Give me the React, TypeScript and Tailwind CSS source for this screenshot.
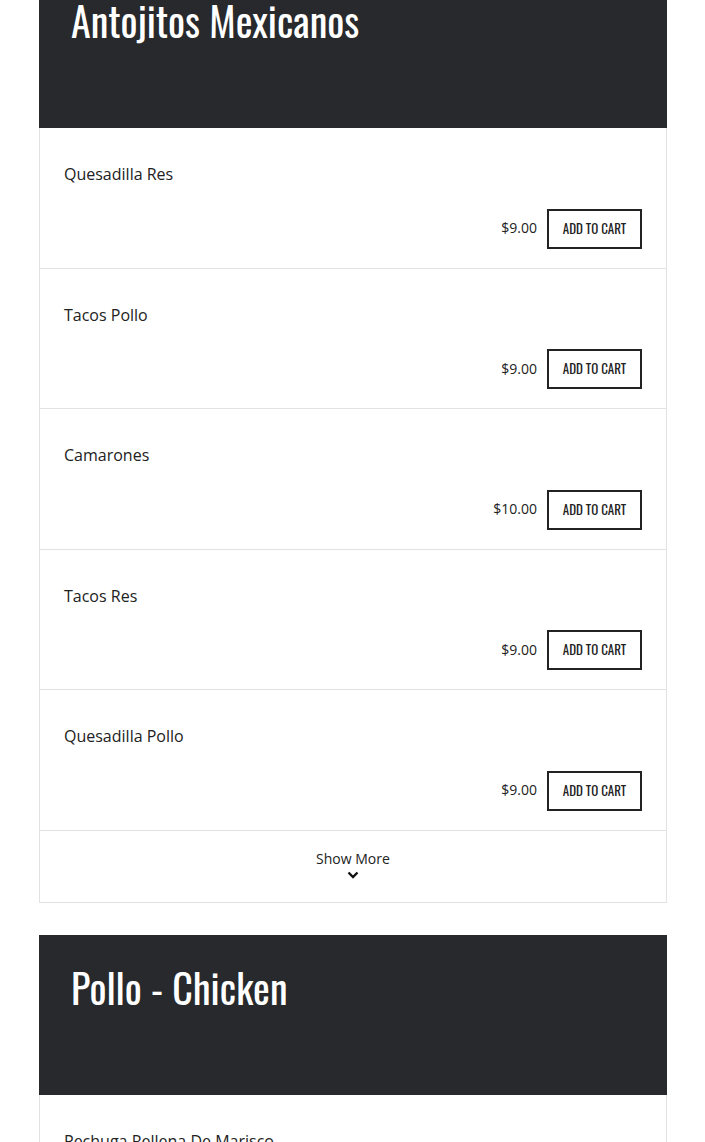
import React from 'react';

type MenuItem = { name: string; price: string };

const antojitos: MenuItem[] = [
    { name: 'Quesadilla Res', price: '$9.00' },
    { name: 'Tacos Pollo', price: '$9.00' },
    { name: 'Camarones', price: '$10.00' },
    { name: 'Tacos Res', price: '$9.00' },
    { name: 'Quesadilla Pollo', price: '$9.00' },
];

const headingFont = "font-['Oswald','Liberation_Sans_Narrow','DejaVu_Sans_Condensed',sans-serif]";

const CategoryHeader = ({ title }: { title: string }) => (
    <div className="bg-[#27292c] h-[160px] px-8 pt-[24px]">
        <h2 className={`${headingFont} text-white text-[40px] leading-[56px]`}>{title}</h2>
    </div>
);

const ItemRow = ({ item }: { item: MenuItem }) => (
    <div className="border-x border-b border-[#e2e2e2] bg-white h-[140.5px] px-[24px] pt-[34px] flex flex-col">
        <div className="text-[16px] leading-6 text-[#222]">{item.name}</div>
        <div className="mt-auto mb-[19px] flex items-center justify-end gap-[10px]">
            <span className="text-[14px] text-[#222] -mt-[2px]">{item.price}</span>
            <button className={`${headingFont} w-[95px] h-10 border-2 border-[#222] text-[13px] uppercase text-[#222]`}>
                Add to Cart
            </button>
        </div>
    </div>
);

export default function App() {
    return (
        <div className="min-h-screen bg-white font-['Open_Sans','Noto_Sans',sans-serif] overflow-hidden">
            <div className="mx-[39px] mt-[-32px] w-[628px]">
                <section>
                    <CategoryHeader title="Antojitos Mexicanos" />
                    {antojitos.map((item) => (
                        <ItemRow key={item.name} item={item} />
                    ))}
                    <div className="border-x border-b border-[#e2e2e2] h-[72px] flex flex-col items-center pt-[18px]">
                        <span className="text-[14px] leading-5 text-[#222]">Show More</span>
                        <svg width="12" height="8" viewBox="0 0 12 8" className="mt-[2px]">
                            <path d="M1.5 1.5 L6 6 L10.5 1.5" fill="none" stroke="#111" strokeWidth="2.4" />
                        </svg>
                    </div>
                </section>
                <section className="mt-8">
                    <CategoryHeader title="Pollo - Chicken" />
                    <div className="border-x border-b border-[#e2e2e2] bg-white h-[140px] px-[24px] pt-[34px]">
                        <div className="text-[16px] leading-6 text-[#222]">Pechuga Rellena De Marisco</div>
                    </div>
                </section>
            </div>
        </div>
    );
}
